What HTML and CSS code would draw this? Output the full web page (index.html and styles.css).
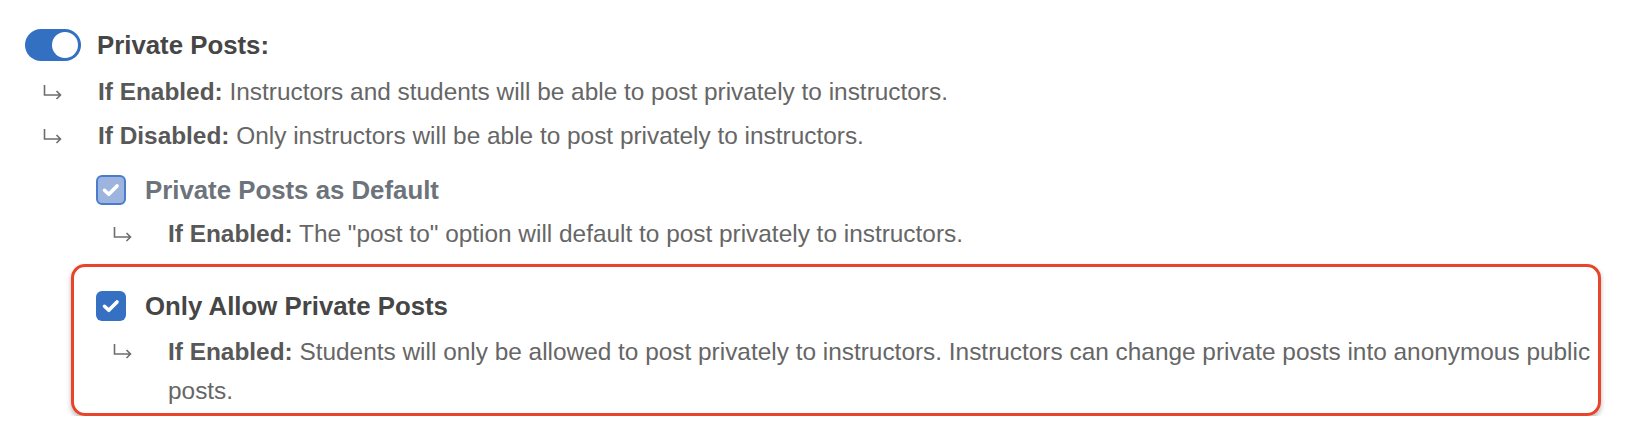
FILE: index.html
```html
<!DOCTYPE html>
<html lang="en">
<head>
<meta charset="utf-8">
<title>Private Posts settings</title>
<link rel="stylesheet" href="styles.css">
</head>
<body>
<div class="page">
  <div class="setting-head">
    <span class="toggle"><span class="knob"></span></span>
    <span class="setting-title">Private Posts:</span>
  </div>
  <ul class="notes notes-top">
    <li><span class="arrow"><svg width="20" height="16" viewBox="0 0 20 16"><path d="M1.5 1v10h16M13.5 7l4 4-4 4" fill="none" stroke="#6d6d6d" stroke-width="1.6"/></svg></span><span class="note-text"><b>If Enabled:</b> Instructors and students will be able to post privately to instructors.</span></li>
    <li><span class="arrow"><svg width="20" height="16" viewBox="0 0 20 16"><path d="M1.5 1v10h16M13.5 7l4 4-4 4" fill="none" stroke="#6d6d6d" stroke-width="1.6"/></svg></span><span class="note-text"><b>If Disabled:</b> Only instructors will be able to post privately to instructors.</span></li>
  </ul>

  <div class="sub sub-default">
    <div class="sub-head">
      <span class="check check-disabled"><svg width="30" height="30" viewBox="0 0 30 30"><path d="M8.5 15.3l4.3 4 8.2-8.4" fill="none" stroke="#fff" stroke-width="3.6" stroke-linecap="round" stroke-linejoin="round"/></svg></span>
      <span class="sub-title muted">Private Posts as Default</span>
    </div>
    <ul class="notes notes-sub">
      <li><span class="arrow"><svg width="20" height="16" viewBox="0 0 20 16"><path d="M1.5 1v10h16M13.5 7l4 4-4 4" fill="none" stroke="#6d6d6d" stroke-width="1.6"/></svg></span><span class="note-text"><b>If Enabled:</b> The "post to" option will default to post privately to instructors.</span></li>
    </ul>
  </div>

  <div class="sub sub-highlight">
    <div class="sub-head">
      <span class="check"><svg width="30" height="30" viewBox="0 0 30 30"><path d="M8.5 15.3l4.3 4 8.2-8.4" fill="none" stroke="#fff" stroke-width="3.6" stroke-linecap="round" stroke-linejoin="round"/></svg></span>
      <span class="sub-title">Only Allow Private Posts</span>
    </div>
    <ul class="notes notes-sub">
      <li><span class="arrow"><svg width="20" height="16" viewBox="0 0 20 16"><path d="M1.5 1v10h16M13.5 7l4 4-4 4" fill="none" stroke="#6d6d6d" stroke-width="1.6"/></svg></span><span class="note-text"><b>If Enabled:</b> Students will only be allowed to post privately to instructors. Instructors can change private posts into anonymous public posts.</span></li>
    </ul>
  </div>
</div>
</body>
</html>
```

FILE: styles.css
```css
html, body {
  margin: 0;
  padding: 0;
  background: #ffffff;
}

.page {
  padding: 29px 0 0 25px;
  font-family: "Liberation Sans", Arial, Helvetica, sans-serif;
  font-size: 24.4px;
  color: #666666;
}

.setting-head {
  display: flex;
  align-items: center;
  gap: 16px;
  height: 32px;
}

.toggle {
  display: flex;
  align-items: center;
  justify-content: flex-end;
  width: 56px;
  height: 32px;
  box-sizing: border-box;
  padding-right: 3px;
  border-radius: 16px;
  background: #3470c2;
  flex: none;
}

.knob {
  width: 26px;
  height: 26px;
  border-radius: 50%;
  background: #ffffff;
}

.setting-title,
.sub-title {
  font-size: 25.8px;
  font-weight: bold;
  color: #464646;
  line-height: 32px;
}

.sub-title.muted {
  color: #6c737b;
}

.notes {
  list-style: none;
  margin: 0;
  padding: 0;
}

.notes li {
  display: flex;
  align-items: flex-start;
  line-height: 38.4px;
}

.notes li + li {
  margin-top: 5.6px;
}

.notes b {
  color: #585858;
}

.arrow {
  flex: none;
  display: flex;
  align-items: center;
  height: 38.4px;
}

.arrow svg {
  display: block;
}

.note-text {
  flex: 1;
  min-width: 0;
}

.notes-top {
  margin-top: 11.8px;
  padding-left: 18px;
}

.notes-top .arrow {
  width: 55px;
}

.sub {
  margin-left: 46px;
  margin-right: 43px;
}

.sub-default {
  margin-top: 19.8px;
  padding-left: 25px;
}

.sub-head {
  display: flex;
  align-items: center;
  gap: 19px;
  height: 30px;
}

.check {
  flex: none;
  width: 30px;
  height: 30px;
  box-sizing: border-box;
  border-radius: 6px;
  background: #3570c3;
  display: flex;
  align-items: center;
  justify-content: center;
}

.check svg {
  display: block;
  flex: none;
}

.check-disabled {
  background: #9cb4de;
  border: 2px solid #4a7ccd;
}

.notes-sub {
  margin-top: 9.5px;
  padding-left: 17px;
}

.notes-sub .arrow {
  width: 55px;
}

.sub-highlight {
  margin-top: 11.5px;
  border: 3px solid #e8442b;
  border-radius: 14px;
  padding: 24px 4px 3px 22px;
  box-shadow: 0 3px 5px rgba(0, 0, 0, 0.28);
}

.sub-highlight .notes-sub {
  margin-top: 10.5px;
}

.sub-highlight .notes li {
  line-height: 39px;
}

.sub-highlight .arrow {
  height: 39px;
}
```
